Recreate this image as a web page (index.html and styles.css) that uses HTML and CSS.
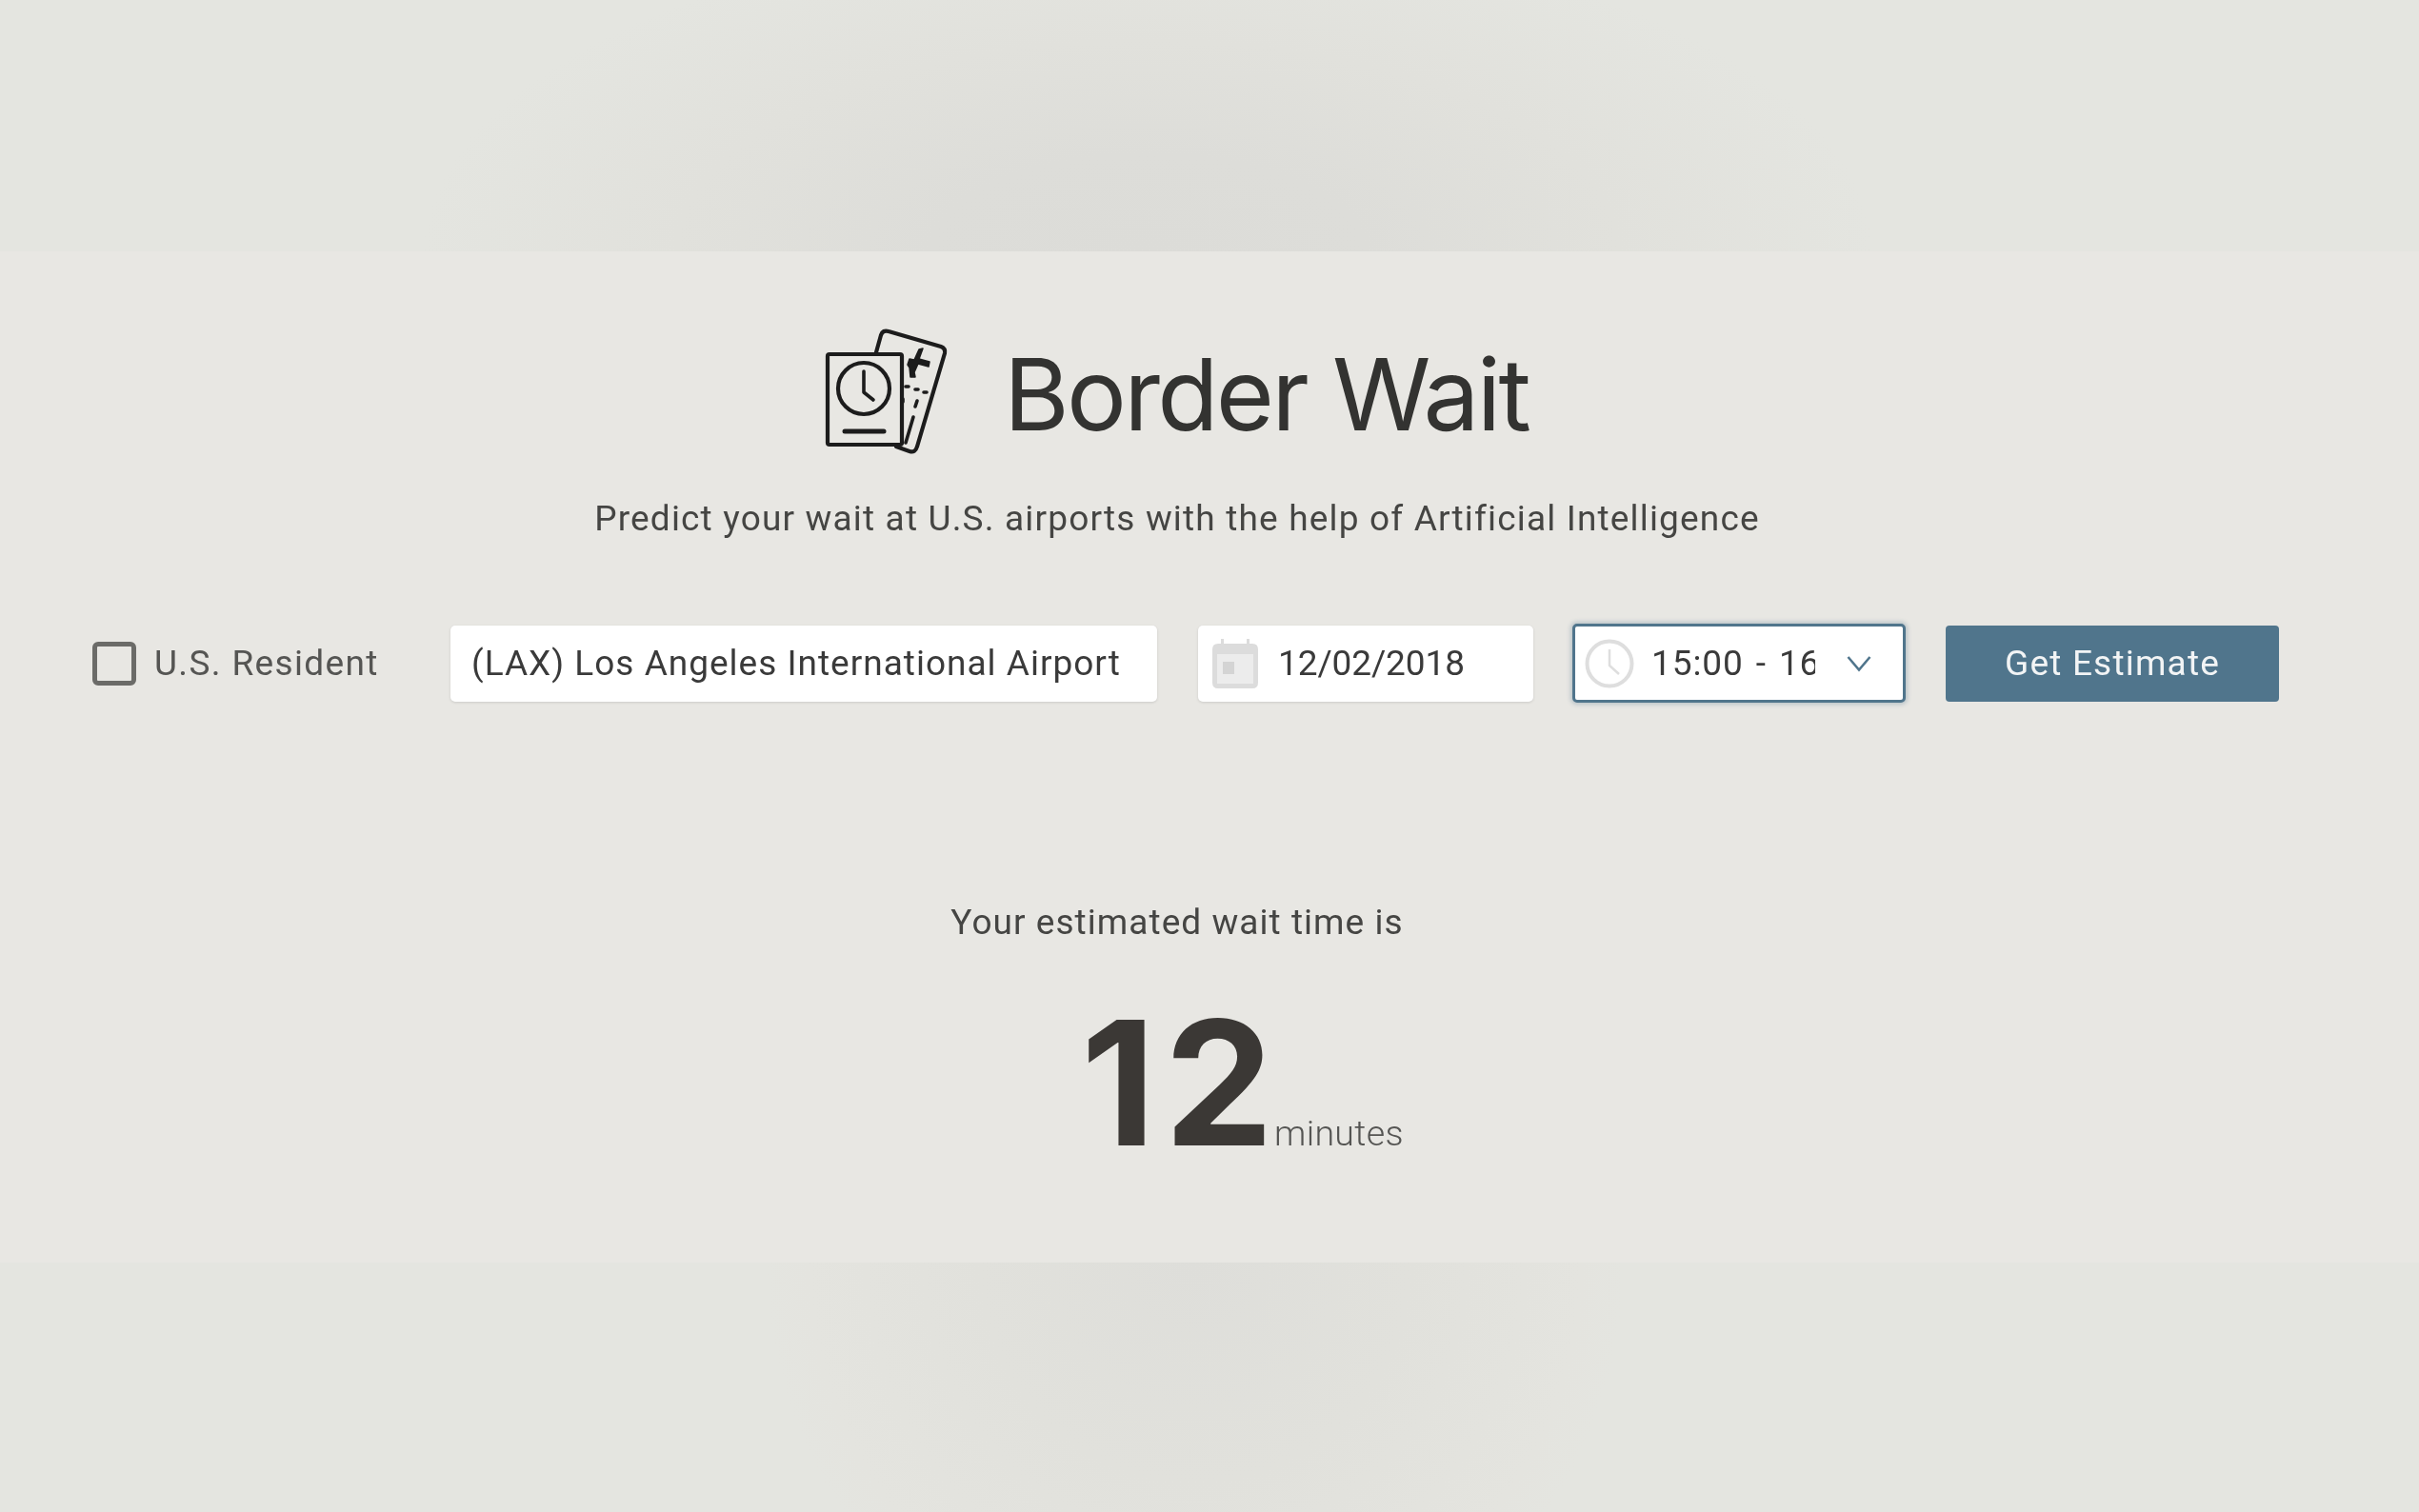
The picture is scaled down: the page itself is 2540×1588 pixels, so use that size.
FILE: index.html
```html
<!DOCTYPE html>
<html lang="en">
<head>
<meta charset="UTF-8">
<title>Border Wait</title>
<link rel="stylesheet" href="styles.css">
</head>
<body>

<div class="backdrop backdrop-top"></div>

<div class="main">
    <div class="brand">
        <svg class="logo" viewBox="0 0 160 150" fill="none" stroke="#1c1c1c" stroke-width="4.2" stroke-linecap="round" stroke-linejoin="round">
            <path d="M71 35 L76 17 Q78 11 84 13 L139 29 Q144 31 143 36 L114 134 Q112 141 106 139 L92 134"/>
            <rect x="20" y="37" width="78" height="95" rx="2"/>
            <circle cx="58" cy="73" r="27"/>
            <path d="M58 55 V77 L68 85" stroke-width="3.6"/>
            <path d="M38 118 H79" stroke-width="5"/>
            <path d="M120 31 L116 42 L127 45 L126 50 L115 47 L111 56 L112 61 L107 61 L106 51 L104 48 L106 42 L111 43 L116 32 Z" fill="#1c1c1c" stroke-width="1.5"/>
            <path d="M102 71 H105 M112 74 H115 M121 77 H124 M99 84 V87 M114 86 L112 92 M110 103 L102 130" stroke-width="3.6"/>
        </svg>
        <h1 class="title">Border Wait</h1>
    </div>
    <p class="tagline">Predict your wait at U.S. airports with the help of Artificial Intelligence</p>

    <div class="controls">
        <div class="resident">
            <span class="checkbox"></span>
            <span class="resident-label">U.S. Resident</span>
        </div>
        <div class="field field-airport">(LAX) Los Angeles International Airport</div>
        <div class="field field-date">
            <svg class="calendar-icon" viewBox="0 0 48 52">
                <path d="M9 0 h3 v5 h24 v-5 h3 v5 h3 q6 0 6 6 v35 q0 6 -6 6 h-36 q-6 0 -6 -6 v-35 q0 -6 6 -6 h3 z" fill="#dcdcdc"/>
                <rect x="5" y="16" width="38" height="31" fill="#ececec"/>
                <rect x="11" y="24" width="12" height="13" fill="#d4d4d4"/>
            </svg>
            <span class="date-value">12/02/2018</span>
        </div>
        <div class="field field-time">
            <svg class="clock-icon" viewBox="0 0 52 52" fill="none" stroke="#dedede" stroke-width="4">
                <circle cx="26" cy="26" r="23.5"/>
                <path d="M26 11 V28 L36 37" stroke-width="2.5"/>
            </svg>
            <span class="time-value">15:00 - 16:00</span>
            <svg class="chevron" viewBox="0 0 26 18" fill="none" stroke="#50758c" stroke-width="2.6">
                <path d="M1.5 2 L13 15.5 L24.5 2"/>
            </svg>
        </div>
        <button class="estimate-btn">Get Estimate</button>
    </div>

    <p class="wait-label">Your estimated wait time is</p>
    <div class="wait-result">
        <span class="wait-number">12</span>
        <span class="wait-unit">minutes</span>
    </div>
</div>

<div class="backdrop backdrop-bottom"></div>

</body>
</html>
```

FILE: styles.css
```css
* {
    box-sizing: border-box;
}

html, body {
    height: 100%;
}

body {
    margin: 0;
    background: #e8e7e3;
    font-family: Roboto, "Noto Sans", sans-serif;
    color: #3c3c3a;
    display: flex;
    flex-direction: column;
    overflow: hidden;
}

.backdrop {
    background-color: #e4e5e0;
}

.backdrop-top {
    height: 264px;
    background-image: radial-gradient(ellipse 760px 340px at 1205px 264px, #dcdcd8 0%, #dddDd9 30%, #e1e1dc 65%, #e4e5e0 100%);
}

.backdrop-bottom {
    height: 262px;
    background-image: radial-gradient(ellipse 450px 460px at 1255px 0, #dededa 0%, #e1e1dc 50%, #e4e4df 90%, #e4e5e0 100%);
}

.main {
    height: 1062px;
    padding-right: 68px;
    background: #e8e7e3;
    filter: blur(0.7px);
    text-align: center;
}

.brand {
    display: flex;
    justify-content: center;
    align-items: flex-start;
    gap: 45px;
    height: 221px;
    padding: 71px 18px 0 0;
}

.logo {
    width: 160px;
    height: 150px;
}

.title {
    margin: 14px 0 0;
    font-family: Inter, sans-serif;
    font-size: 105px;
    font-weight: 400;
    line-height: 130px;
    letter-spacing: -2.7px;
    color: #333331;
}

.tagline {
    margin: 38px 0 0;
    font-size: 37px;
    line-height: 44px;
    letter-spacing: 1.17px;
    color: #454543;
}

.controls {
    display: flex;
    align-items: center;
    margin: 88px 79px 0 97px;
    height: 83px;
}

.resident {
    display: flex;
    align-items: center;
    gap: 19px;
    width: 376px;
}

.checkbox {
    width: 46px;
    height: 46px;
    border: 5px solid #6b6b68;
    border-radius: 6px;
}

.resident-label {
    font-size: 37px;
    letter-spacing: 1.35px;
    color: #555553;
}

.field {
    display: flex;
    align-items: center;
    height: 80px;
    background: #fff;
    border-radius: 5px;
    box-shadow: 0 1px 3px rgba(0, 0, 0, 0.12);
    font-size: 37px;
    letter-spacing: 1px;
    color: #3a3a3a;
    white-space: nowrap;
}

.field-airport {
    width: 742px;
    padding-left: 22px;
}

.field-date {
    width: 352px;
    margin-left: 43px;
    padding-left: 15px;
    gap: 21px;
}

.date-value {
    letter-spacing: -0.1px;
}

.calendar-icon {
    width: 48px;
    height: 52px;
}

.field-time {
    width: 350px;
    height: 83px;
    margin-left: 41px;
    padding-left: 10px;
    border: 3px solid #50758c;
    box-shadow: 0 0 4px 2px rgba(80, 117, 140, 0.3);
}

.clock-icon {
    width: 52px;
    height: 52px;
}

.time-value {
    width: 172px;
    margin-left: 18px;
    overflow: hidden;
    letter-spacing: 0.9px;
    word-spacing: 3px;
}

.chevron {
    width: 26px;
    height: 18px;
    margin-left: 33px;
}

.estimate-btn {
    width: 350px;
    height: 80px;
    margin-left: 42px;
    padding: 0;
    background: #50758c;
    border: 0;
    border-radius: 4px;
    font-family: inherit;
    font-size: 37px;
    letter-spacing: 1.2px;
    color: #f2f4f5;
}

.wait-label {
    margin: 209px 0 0;
    font-size: 37px;
    line-height: 44px;
    letter-spacing: 1.05px;
    color: #454543;
}

.wait-result {
    display: grid;
    grid-template-columns: 1fr auto 1fr;
    align-items: baseline;
    margin-top: 46px;
}

.wait-number {
    grid-column: 2;
    margin-right: -9px;
    font-family: Inter, sans-serif;
    font-size: 182px;
    font-weight: 700;
    line-height: 200px;
    letter-spacing: 9px;
    color: #3b3835;
}

.wait-unit {
    padding-left: 1px;
    font-size: 37.6px;
    font-weight: 300;
    letter-spacing: 0.3px;
    text-align: left;
    color: #555553;
}
```
